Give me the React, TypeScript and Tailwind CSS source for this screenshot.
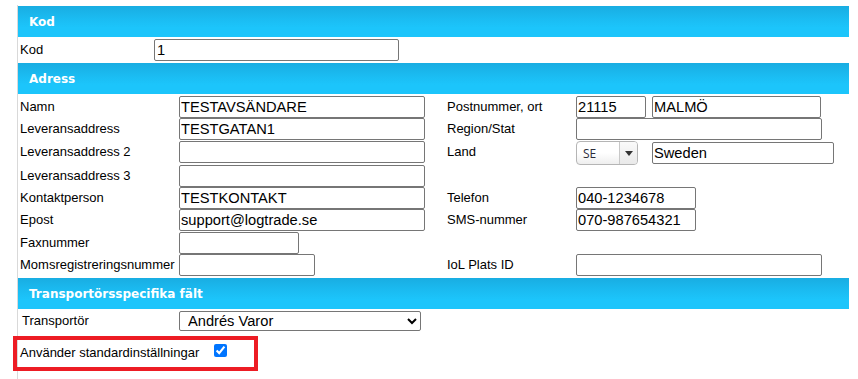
import React from "react";

function Header({ children }: { children: React.ReactNode }) {
  return (
    <div className="h-[31px] flex items-center pl-[11px] bg-[linear-gradient(to_bottom,#19ade2_0%,#1bbdf3_45%,#1cc5fb_70%,#1cc5fb_100%)] text-white font-bold text-[12px] font-['DejaVu_Sans',Verdana,sans-serif]">
      {children}
    </div>
  );
}

function Field({ value = "", className = "" }: { value?: string; className?: string }) {
  return (
    <input
      readOnly
      defaultValue={value}
      className={
        "h-[22px] border border-[#767676] rounded-[2px] bg-white px-[1px] text-[14.67px] text-black outline-none font-['Liberation_Sans',Arial,sans-serif] " +
        className
      }
    />
  );
}

function CountrySelect() {
  return (
    <div className="w-[62px] h-[24px] flex border border-[#b5b5b5] rounded-[4px] overflow-hidden bg-[linear-gradient(to_bottom,#ffffff_0%,#ffffff_50%,#eeeeee_100%)]">
      <div className="w-[42px] pl-[6px] leading-[22px] text-[12px] text-[#2b2b3a] font-['Open_Sans',sans-serif] pt-[1px]">SE</div>
      <div className="flex-1 border-l border-[#c8c8c8] flex items-center justify-center bg-[linear-gradient(to_bottom,#fafafa_0%,#e9e9e9_100%)]">
        <svg width="8" height="5" viewBox="0 0 8 5">
          <path d="M0 0 L8 0 L4 5 Z" fill="#333" />
        </svg>
      </div>
    </div>
  );
}

export default function App() {
  return (
    <div className="w-[858px] h-[379px] bg-white overflow-hidden relative font-['Liberation_Sans',Arial,sans-serif] text-[13px] text-black">
      <div className="ml-[17px] mr-[9px] mt-[5px] border-l border-[#d9d9d9] pt-px h-[374px]">
        <Header>Kod</Header>
        <div className="flex items-start h-[26px] pt-[2px]">
          <div className="w-[136px] pl-[2px] leading-[22px]">Kod</div>
          <Field value="1" className="w-[245px] pl-[2px]" />
        </div>

        <Header>Adress</Header>
        <div className="pt-[2px] pb-[2px]">
          {/* row 1 */}
          <div className="flex items-start h-[22px] leading-[22px]">
            <div className="w-[161px] pl-[2px]">Namn</div>
            <div className="w-[268px]"><Field value="TESTAVSÄNDARE" className="w-[246px]" /></div>
            <div className="w-[129px]">Postnummer, ort</div>
            <div className="flex gap-[6px]">
              <Field value="21115" className="w-[70px]" />
              <Field value="MALMÖ" className="w-[169px]" />
            </div>
          </div>
          {/* row 2 */}
          <div className="flex items-start h-[23px] leading-[22px]">
            <div className="w-[161px] pl-[2px]">Leveransaddress</div>
            <div className="w-[268px]"><Field value="TESTGATAN1" className="w-[246px]" /></div>
            <div className="w-[129px]">Region/Stat</div>
            <Field className="w-[246px]" />
          </div>
          {/* row 3 */}
          <div className="flex items-start h-[24px] leading-[22px]">
            <div className="w-[161px] pl-[2px]">Leveransaddress 2</div>
            <div className="w-[268px]"><Field className="w-[246px]" /></div>
            <div className="w-[129px]">Land</div>
            <div className="flex items-start gap-[14px]">
              <CountrySelect />
              <Field value="Sweden" className="w-[182px] mt-px" />
            </div>
          </div>
          {/* row 4 */}
          <div className="flex items-start h-[22px] leading-[22px]">
            <div className="w-[161px] pl-[2px]">Leveransaddress 3</div>
            <div className="w-[268px]"><Field className="w-[246px]" /></div>
          </div>
          {/* row 5 */}
          <div className="flex items-start h-[22px] leading-[22px]">
            <div className="w-[161px] pl-[2px]">Kontaktperson</div>
            <div className="w-[268px]"><Field value="TESTKONTAKT" className="w-[246px]" /></div>
            <div className="w-[129px]">Telefon</div>
            <Field value="040-1234678" className="w-[120px]" />
          </div>
          {/* row 6 */}
          <div className="flex items-start h-[23px] leading-[22px]">
            <div className="w-[161px] pl-[2px]">Epost</div>
            <div className="w-[268px]"><Field value="support@logtrade.se" className="w-[246px]" /></div>
            <div className="w-[129px]">SMS-nummer</div>
            <Field value="070-987654321" className="w-[120px]" />
          </div>
          {/* row 7 */}
          <div className="flex items-start h-[22px] leading-[22px]">
            <div className="w-[161px] pl-[2px]">Faxnummer</div>
            <div className="w-[268px]"><Field className="w-[120px]" /></div>
          </div>
          {/* row 8 */}
          <div className="flex items-start h-[22px] leading-[22px]">
            <div className="w-[161px] pl-[2px] whitespace-nowrap">Momsregistreringsnummer</div>
            <div className="w-[268px]"><Field className="w-[136px]" /></div>
            <div className="w-[129px]">IoL Plats ID</div>
            <Field className="w-[246px]" />
          </div>
        </div>

        <Header>Transportörsspecifika fält</Header>
        <div className="flex items-start h-[25px] pt-[2px]">
          <div className="w-[161px] pl-[4px] leading-[20px]">Transportör</div>
          <select
            defaultValue="Andrés Varor"
            className="w-[242px] h-[20px] border border-[#767676] rounded-[2px] bg-white text-[14.67px] text-black pl-[4px] font-['Liberation_Sans',Arial,sans-serif]"
          >
            <option>Andrés Varor</option>
          </select>
        </div>

        <div className="relative flex items-center h-[38px]">
          <div className="w-[196px] pl-[2px]">Använder standardinställningar</div>
          <input type="checkbox" defaultChecked className="w-[13px] h-[13px] mb-[6px] accent-[#0075ff]" />
          <div className="absolute left-[-5px] top-[2px] w-[245px] h-[35px] border-4 border-[#ed1c24]" />
        </div>
      </div>
    </div>
  );
}
